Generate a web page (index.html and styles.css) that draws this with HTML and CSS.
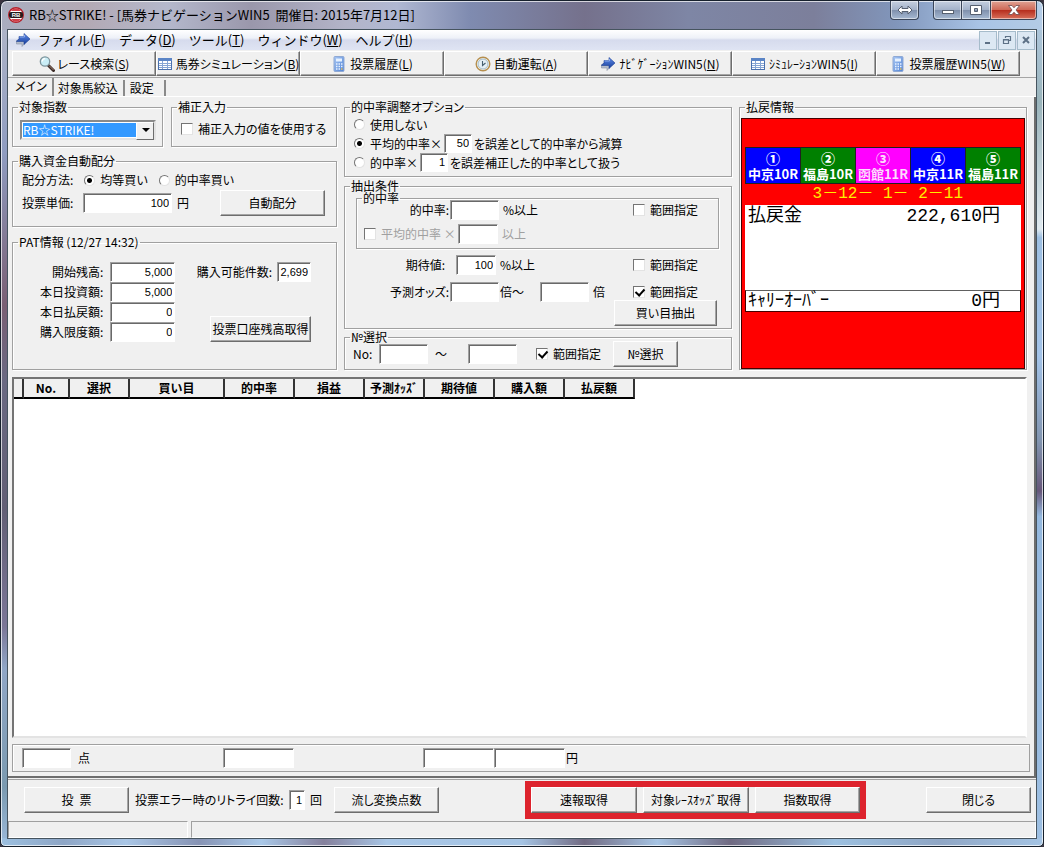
FILE: index.html
```html
<!DOCTYPE html>
<html lang="ja">
<head>
    <meta charset="utf-8">
    <title>RB☆STRIKE! - [馬券ナビゲーションWIN5]</title>
    <meta name="viewport" content="width=device-width, initial-scale=1">
    <link rel="stylesheet" href="styles.css">
</head>
<body>

<!-- アイコン定義 -->
<svg class="defs" width="0" height="0" aria-hidden="true">
    <defs>
        <linearGradient id="g-arrow" x1="0" y1="0" x2="0" y2="1">
            <stop offset="0" stop-color="#5f8be8"/><stop offset="1" stop-color="#173f9c"/>
        </linearGradient>
        <linearGradient id="g-calc" x1="0" y1="0" x2="1" y2="1">
            <stop offset="0" stop-color="#a9c8f5"/><stop offset="1" stop-color="#4f82d4"/>
        </linearGradient>
    </defs>
    <symbol id="i-arrow" viewBox="0 0 16 16">
        <path d="M1.500 8.500H7V6l4 4-4 4.500V12H1.500z" fill="#b4bccb" stroke="#8791a5" stroke-width=".6"/>
        <path d="M4 4.500h5V1.500l6 5.500L9 12.500V9.500H1.500L3 7.500h1z" fill="url(#g-arrow)" stroke="#1d3f93" stroke-width=".6"/>
        <path d="M4.500 5h5V3" fill="none" stroke="#9dbaf2" stroke-width=".8"/>
    </symbol>
    <symbol id="i-search" viewBox="0 0 16 16">
        <path d="M9.500 9.500l5 5" stroke="#3b2a26" stroke-width="3" stroke-linecap="round"/>
        <path d="M10 9.500l4.500 4.500" stroke="#a98775" stroke-width="1"/>
        <circle cx="6" cy="5.500" r="4.700" fill="#c9edf6" stroke="#7d949c" stroke-width="1.300"/>
        <path d="M3.200 5.500a3 3 0 0 1 3-2.800" fill="none" stroke="#fff" stroke-width="1.300"/>
    </symbol>
    <symbol id="i-table" viewBox="0 0 16 16">
        <rect x="1.500" y="2.500" width="13" height="11" fill="#fff" stroke="#4a70ad"/>
        <path d="M1 2h14v3H1z" fill="#5b85c6"/>
        <path d="M2 7.500h12M2 9.500h12M2 11.500h12M5.500 5v8M10.500 5v8" stroke="#86a5d4"/>
    </symbol>
    <symbol id="i-calc" viewBox="0 0 16 16">
        <rect x="3" y=".5" width="10" height="15" rx="1" fill="url(#g-calc)" stroke="#8fa9d4"/>
        <rect x="5" y="2.500" width="6" height="3" fill="#e6f1ff"/>
        <path d="M5 8h1.500M7.500 8H9M10 8h1.500M5 10.500h1.500M7.500 10.500H9M10 10.500h1.500M5 13h1.500M7.500 13H9" stroke="#e9f2ff" stroke-width="1.500"/>
        <path d="M10 13h1.500" stroke="#e7bd55" stroke-width="1.500"/>
    </symbol>
    <symbol id="i-clock" viewBox="0 0 16 16">
        <circle cx="8" cy="8" r="6.800" fill="#f5fafc" stroke="#b68f4e" stroke-width="1.400"/>
        <circle cx="8" cy="8" r="5" fill="#e4f0f6" stroke="#8fa9b8" stroke-width=".8"/>
        <path d="M7.500 5V9.500l3-2.500" fill="none" stroke="#46606f" stroke-width="1.100"/>
    </symbol>
</svg>

<div class="window">
    <header class="titlebar">
        <svg class="app-icon" viewBox="0 0 16 16" aria-hidden="true">
            <circle cx="8" cy="8" r="7.300" fill="#fff" stroke="#b3202a" stroke-width="1.400"/>
            <path d="M3 4a6 6 0 0 1 10 0zM3 12a6 6 0 0 0 10 0z" fill="#d0404a"/>
            <rect x="1" y="5" width="14" height="6" rx="2" fill="#251a1c"/>
            <text x="8" y="10.200" class="app-icon-text" text-anchor="middle">RB</text>
        </svg>
        <h1 class="title">RB☆STRIKE! - [馬券ナビゲーションWIN5&nbsp; 開催日: 2015年7月12日]</h1>
        <button class="cap cap-help" aria-label="切り替え">
            <svg width="16" height="10" viewBox="0 0 16 10"><path d="M1 5l4-4v2.500h6V1l4 4-4 4V6.500H5V9z" fill="#fff" stroke="#566070"/></svg>
        </button>
        <div class="cap-group">
            <button class="cap" aria-label="最小化">
                <svg width="12" height="10" viewBox="0 0 12 10"><rect x=".5" y="5.500" width="11" height="3" fill="#fff" stroke="#566070"/></svg>
            </button>
            <button class="cap" aria-label="最大化">
                <svg width="12" height="10" viewBox="0 0 12 10"><path d="M.5.5h11v9H.5zM4.500 3.500v3h3v-3z" fill="#fff" fill-rule="evenodd" stroke="#566070"/></svg>
            </button>
            <button class="cap cap-close" aria-label="ウィンドウを閉じる">
                <svg width="12" height="10" viewBox="0 0 12 10"><path d="M.5.500h3.500l2 2.300 2-2.300h3.500L8 5l3.500 4.500H8L6 7.200 4 9.500H.5L4 5z" fill="#fff" stroke="#6d4a4c" stroke-width=".8"/></svg>
            </button>
        </div>
    </header>

    <div class="client">
        <nav class="menubar">
            <svg class="icon" aria-hidden="true"><use href="#i-arrow"/></svg>
            <a href="#">ファイル(<u>F</u>)</a>
            <a href="#">データ(<u>D</u>)</a>
            <a href="#">ツール(<u>T</u>)</a>
            <a href="#">ウィンドウ(<u>W</u>)</a>
            <a href="#">ヘルプ(<u>H</u>)</a>
            <div class="mdi">
                <button aria-label="子ウィンドウを最小化"><svg width="10" height="10" viewBox="0 0 10 10"><path d="M2 8h5" stroke="#5d7186" stroke-width="2"/></svg></button>
                <button aria-label="子ウィンドウを元に戻す"><svg width="10" height="10" viewBox="0 0 10 10"><path d="M3.500 3V1.500h5v4H7M3 1.500h6M1.500 4.500h5v4h-5zM1 5h6" fill="none" stroke="#5d7186" stroke-width="1.200"/></svg></button>
                <button aria-label="子ウィンドウを閉じる"><svg width="10" height="10" viewBox="0 0 10 10"><path d="M2 2l6 6M8 2L2 8" stroke="#5d7186" stroke-width="2"/></svg></button>
            </div>
        </nav>

        <div class="toolbar">
            <button class="btn"><svg class="icon"><use href="#i-search"/></svg><span>レース検索(<u>S</u>)</span></button>
            <button class="btn"><svg class="icon"><use href="#i-table"/></svg><span>馬券シミュレーション(<u>B</u>)</span></button>
            <button class="btn"><svg class="icon"><use href="#i-calc"/></svg><span>投票履歴(<u>L</u>)</span></button>
            <button class="btn"><svg class="icon"><use href="#i-clock"/></svg><span>自動運転(<u>A</u>)</span></button>
            <button class="btn"><svg class="icon"><use href="#i-arrow"/></svg><span>ﾅﾋﾞｹﾞｰｼｮﾝWIN5(<u>N</u>)</span></button>
            <button class="btn"><svg class="icon"><use href="#i-table"/></svg><span>ｼﾐｭﾚｰｼｮﾝWIN5(<u>I</u>)</span></button>
            <button class="btn"><svg class="icon"><use href="#i-calc"/></svg><span>投票履歴WIN5(<u>W</u>)</span></button>
        </div>

        <div class="tabs" role="tablist">
            <button class="tab active" role="tab" aria-selected="true">メイン</button>
            <button class="tab" role="tab" aria-selected="false">対象馬絞込</button>
            <button class="tab" role="tab" aria-selected="false">設定</button>
        </div>

        <main class="page">
            <div class="panels">
                <div class="col">
                    <div class="pair">
                        <fieldset class="group">
                            <legend>対象指数</legend>
                            <div class="combo">
                                <select aria-label="対象指数">
                                    <option>RB☆STRIKE!</option>
                                </select>
                            </div>
                        </fieldset>
                        <fieldset class="group">
                            <legend>補正入力</legend>
                            <label class="check fix-check"><input type="checkbox">補正入力の値を使用する</label>
                        </fieldset>
                    </div>

                    <fieldset class="group alloc">
                        <legend>購入資金自動配分</legend>
                        <div class="alloc-body">
                            <div class="row alloc-method">
                                <span>配分方法:</span>
                                <label class="check"><input type="radio" name="alloc" checked>均等買い</label>
                                <label class="check"><input type="radio" name="alloc">的中率買い</label>
                            </div>
                            <div class="row alloc-price">
                                <label for="price">投票単価:</label>
                                <input class="num w-price" type="text" id="price" value="100">
                                <span>円</span>
                                <button class="btn btn-m">自動配分</button>
                            </div>
                        </div>
                    </fieldset>

                    <fieldset class="group pat">
                        <legend>PAT情報 (12/27 14:32)</legend>
                        <div class="pat-body">
                            <div class="pat-list">
                                <label for="p1">開始残高:</label><input class="num" type="text" id="p1" value="5,000">
                                <label for="p2">本日投資額:</label><input class="num" type="text" id="p2" value="5,000">
                                <label for="p3">本日払戻額:</label><input class="num" type="text" id="p3" value="0">
                                <label for="p4">購入限度額:</label><input class="num" type="text" id="p4" value="0">
                            </div>
                            <div class="pat-side">
                                <div class="row">
                                    <label for="p5">購入可能件数:</label>
                                    <input class="num w-count" type="text" id="p5" value="2,699">
                                </div>
                                <button class="btn">投票口座残高取得</button>
                            </div>
                        </div>
                    </fieldset>
                </div>

                <div class="col">
                    <fieldset class="group adjust">
                        <legend>的中率調整オプション</legend>
                        <div class="adjust-body">
                            <div class="row">
                                <label class="check"><input type="radio" name="adj">使用しない</label>
                            </div>
                            <div class="row">
                                <label class="check"><input type="radio" name="adj" checked>平均的中率×</label>
                                <input class="num w-rate" type="text" value="50" aria-label="平均的中率の係数">
                                <span>を誤差として的中率から減算</span>
                            </div>
                            <div class="row">
                                <label class="check"><input type="radio" name="adj">的中率×</label>
                                <input class="num w-rate" type="text" value="1" aria-label="的中率の係数">
                                <span>を誤差補正した的中率として扱う</span>
                            </div>
                        </div>
                    </fieldset>

                    <fieldset class="group extract">
                        <legend>抽出条件</legend>
                        <fieldset class="group hit">
                            <legend>的中率</legend>
                            <div class="hit-body">
                                <div class="row">
                                    <label class="lead" for="hit">的中率:</label>
                                    <input class="w-s" type="text" id="hit">
                                    <span class="unit">%以上</span>
                                    <label class="check range"><input type="checkbox">範囲指定</label>
                                </div>
                                <div class="row disabled">
                                    <label class="check lead-check"><input type="checkbox" disabled>平均的中率 ×</label>
                                    <input class="w-xs" type="text" disabled aria-label="平均的中率の倍率">
                                    <span class="unit">以上</span>
                                </div>
                            </div>
                        </fieldset>
                        <div class="row cond">
                            <label class="lead lead-expect" for="expect">期待値:</label>
                            <input class="num w-xs" type="text" id="expect" value="100">
                            <span class="unit">%以上</span>
                            <label class="check range"><input type="checkbox">範囲指定</label>
                        </div>
                        <div class="row cond">
                            <label class="lead" for="odds">予測オッズ:</label>
                            <input class="w-s" type="text" id="odds">
                            <span class="odds-from">倍〜</span>
                            <input class="w-s" type="text" aria-label="予測オッズ上限">
                            <span class="unit">倍</span>
                            <label class="check range"><input type="checkbox" checked>範囲指定</label>
                        </div>
                        <button class="btn btn-extract">買い目抽出</button>
                    </fieldset>

                    <fieldset class="group select-no">
                        <legend>№選択</legend>
                        <div class="row">
                            <label for="no1">No:</label>
                            <input class="w-s" type="text" id="no1">
                            <span class="tilde">〜</span>
                            <input class="w-s" type="text" aria-label="No上限">
                            <label class="check"><input type="checkbox" checked>範囲指定</label>
                            <button class="btn">№選択</button>
                        </div>
                    </fieldset>
                </div>

                <fieldset class="group payout">
                    <legend>払戻情報</legend>
                    <div class="board">
                        <div class="races">
                            <div class="race blue"><b>①</b>中京10R</div>
                            <div class="race green"><b>②</b>福島10R</div>
                            <div class="race pink"><b>③</b>函館11R</div>
                            <div class="race blue"><b>④</b>中京11R</div>
                            <div class="race green"><b>⑤</b>福島11R</div>
                        </div>
                        <div class="result"> 3－12－ 1－ 2－11</div>
                        <div class="money money-main"><span>払戻金</span><span>222,610円</span></div>
                        <div class="money"><span>ｷｬﾘｰｵｰﾊﾞｰ</span><span>0円</span></div>
                    </div>
                </fieldset>
            </div>

            <div class="grid-box">
                <table class="bets">
                    <thead>
                        <tr>
                            <th class="c-mark"></th>
                            <th class="c-no">No.</th>
                            <th class="c-60">選択</th>
                            <th class="c-95">買い目</th>
                            <th class="c-70">的中率</th>
                            <th class="c-70">損益</th>
                            <th class="c-60">予測ｵｯｽﾞ</th>
                            <th class="c-70">期待値</th>
                            <th class="c-70">購入額</th>
                            <th class="c-70">払戻額</th>
                        </tr>
                    </thead>
                </table>
            </div>

            <div class="totals">
                <input class="w-s" type="text" id="points" aria-label="点数">
                <label class="t-unit" for="points">点</label>
                <input class="w-t t-mid" type="text" aria-label="合計">
                <input class="w-t t-buy" type="text" aria-label="購入額合計">
                <input class="w-t" type="text" id="pay" aria-label="払戻額合計">
                <label for="pay">円</label>
            </div>
        </main>

        <div class="actions">
            <button class="btn btn-m">投&ensp;票</button>
            <label class="retry" for="retry">投票エラー時のリトライ回数:</label>
            <input class="w-retry num" type="text" id="retry" value="1">
            <span class="times">回</span>
            <button class="btn btn-m">流し変換点数</button>
            <div class="highlight">
                <button class="btn">速報取得</button>
                <button class="btn">対象ﾚｰｽｵｯｽﾞ取得</button>
                <button class="btn">指数取得</button>
            </div>
            <button class="btn btn-m btn-close">閉じる</button>
        </div>

        <footer class="status">
            <div class="status-cell"></div>
            <div class="status-cell"></div>
        </footer>
    </div>
</div>

</body>
</html>
```
FILE: styles.css
```css
* {
    box-sizing: border-box;
}
body {
    margin: 0;
    background: #3a3440;
    color: #000;
    font-family: "Noto Sans CJK JP", sans-serif;
    font-size: 12px;
    line-height: 12px;
    font-feature-settings: "palt";
}
button, input, select {
    font: inherit;
    font-feature-settings: inherit;
    color: inherit;
    margin: 0;
}
.defs {
    position: absolute;
}
.icon {
    width: 16px;
    height: 16px;
    flex: none;
}

/* ウィンドウ枠 */
.window {
    display: flex;
    flex-direction: column;
    min-height: 100vh;
    padding: 0 6px 7px;
    border: 1px solid #16202c;
    border-radius: 7px 7px 5px 5px;
    box-shadow: inset 0 0 0 1px rgba(255, 255, 255, 0.7);
    background:
        linear-gradient(90deg, #a9aec0 0, #b3a9b4 8%, #b4b8cc 16%, #9a97ab 24%, #b3b4c8 33%, #b0b8d2 38%, #7f8bb0 45%, #75718c 56%, #7e86a5 66%, #7c7f9b 78%, #8196bb 86%, #a9c4e6 94%, #b4cce6 100%) top / 100% 29px no-repeat,
        linear-gradient(90deg, #9cc0e0 0, #8ea6c6 6%, #a9c6e6 12%, #8693b4 19%, #a9c8e8 25%, #85819d 31%, #a8c6e6 37%, #a5c4e4 50%, #716b83 56%, #a6c4e4 63%, #6f6a82 70%, #9cc0e0 80%, #8fa6c5 90%, #a4c4e4 100%) bottom / 100% 8px no-repeat,
        linear-gradient(180deg, #b4b9c9 0, #8f9cc0 18%, #7a5f74 36%, #6a6982 45%, #625f75 60%, #7b7697 74%, #90a6c6 79%, #7b9ab0 93%, #9cbadb 100%) left / 50% 100% no-repeat,
        linear-gradient(180deg, #b4cce6 0, #9ab4bb 12%, #dfe9ef 27%, #9dbfe2 28%, #a3c3e8 42%, #8295b0 52%, #66577a 58%, #94b8de 61%, #9dbfe2 100%) right / 50% 100% no-repeat;
}
.titlebar {
    display: flex;
    align-items: flex-start;
    height: 28px;
    padding-left: 1px;
}
.app-icon {
    width: 16px;
    height: 16px;
    margin-top: 6px;
}
.app-icon-text {
    font: bold 6px "Liberation Sans", sans-serif;
    fill: #fff;
}
.title {
    flex: 1;
    margin: 0 0 0 5px;
    font-size: 13px;
    font-weight: normal;
    font-feature-settings: normal;
    line-height: 27px;
    white-space: nowrap;
}
.cap-group {
    display: flex;
    margin-left: 14px;
}
.cap {
    display: flex;
    align-items: center;
    justify-content: center;
    width: 29px;
    height: 19px;
    padding: 0;
    border: 1px solid #3b4659;
    border-top: 0;
    background: linear-gradient(#c5d0e0, #a3b2c9 48%, #7e8fab 50%, #a7bad3);
    box-shadow: inset 0 0 0 1px rgba(255, 255, 255, 0.5);
}
.cap + .cap {
    border-left: 0;
}
.cap-help {
    border-radius: 0 0 4px 4px;
}
.cap-group .cap:first-child {
    border-bottom-left-radius: 4px;
}
.cap-group .cap-close {
    width: 46px;
    border-bottom-right-radius: 4px;
    background: linear-gradient(#e0a394, #cf6a58 48%, #b52c1c 50%, #d8705c);
}
.client {
    flex: 1;
    display: flex;
    flex-direction: column;
    border: 1px solid #46545f;
    background: #f0f0f0;
}

/* メニュー */
.menubar {
    display: flex;
    align-items: center;
    height: 20px;
    padding: 0 1px 0 7px;
    background: linear-gradient(#fff, #eef1f8 40%, #d6dbed 50%, #dfe4f3);
    font-size: 13px;
    font-feature-settings: normal;
}
.menubar a {
    color: #000;
    text-decoration: none;
    margin-left: 13px;
}
.menubar .icon + a {
    margin-left: 7px;
}
.mdi {
    display: flex;
    gap: 1px;
    margin-left: auto;
}
.mdi button {
    display: flex;
    align-items: center;
    justify-content: center;
    width: 18px;
    height: 19px;
    padding: 0;
    border: 1px solid #a6bccb;
    background: #dce8f3;
}

/* ボタン */
.btn {
    display: flex;
    align-items: center;
    justify-content: center;
    height: 26px;
    padding: 0;
    border: 1px solid;
    border-color: #fff #6d6d6d #6d6d6d #fff;
    box-shadow: inset -1px -1px 0 #a5a5a5;
    background: #f0f0f0;
    white-space: nowrap;
}
.btn-m {
    width: 105px;
}
.toolbar {
    display: flex;
    padding: 1px 16px 1px 4px;
    border-bottom: 1px solid #a5a5a5;
}
.toolbar .btn {
    flex: 1 1 0;
    min-width: 0;
    gap: 3px;
    height: 25px;
}

/* タブ */
.tabs {
    display: flex;
    align-items: flex-end;
    height: 19px;
    border-bottom: 1px solid #fff;
}
.tab {
    height: 16px;
    padding: 0 5px 0 4px;
    border: 0;
    border-right: 2px solid #8a8a8a;
    background: none;
}
.tab:last-child {
    padding: 0 10px 0 5px;
}
.tab.active {
    height: 18px;
    padding: 0 5px 2px 7px;
}
.page {
    flex: 1;
    display: flex;
    flex-direction: column;
    padding: 4px;
    border-right: 2px solid #6d6d6d;
    border-bottom: 2px solid #6d6d6d;
}

/* グループ枠 */
.group {
    min-width: 0;
    margin: 0;
    padding: 0;
    border: 1px solid #a0a0a0;
    box-shadow: 1px 1px 0 #fff, inset 1px 1px 0 #fff;
}
.group legend {
    margin-left: 5px;
    padding: 0 1px;
    height: 12px;
}
.panels {
    display: grid;
    grid-template-columns: 325fr 388fr 288fr;
    gap: 7px;
    margin-right: 3px;
}
.col {
    display: flex;
    flex-direction: column;
    min-width: 0;
}
.row {
    display: flex;
    align-items: center;
    white-space: nowrap;
}
input[type=text] {
    width: 49px;
    height: 20px;
    padding: 0 0 0 1px;
    border: 1px solid;
    border-color: #a0a0a0 #fff #fff #a0a0a0;
    border-radius: 0;
    box-shadow: inset 1px 1px 0 #696969;
    background: #fff;
    min-width: 0;
}
input.num {
    padding: 0 2px 1px 1px;
    font-family: "Liberation Sans", sans-serif;
    font-size: 11px;
    text-align: right;
}
.check {
    display: flex;
    align-items: center;
    gap: 5px;
    white-space: nowrap;
}
.check input {
    appearance: none;
    flex: none;
    width: 12px;
    height: 12px;
    border: 1px solid;
    border-color: #747474 #e3e3e3 #e3e3e3 #747474;
    background: #fff;
    position: relative;
}
.check input[type=radio] {
    width: 11px;
    height: 11px;
    border-radius: 50%;
}
.check input[type=radio]:checked {
    background: radial-gradient(circle, #000 2px, #fff 3px);
}
.check input[type=checkbox]:checked::after {
    content: "";
    position: absolute;
    left: 3px;
    top: 0;
    width: 4px;
    height: 7px;
    border: solid #000;
    border-width: 0 2px 2px 0;
    transform: rotate(42deg);
}

/* 左列 */
.pair {
    display: grid;
    grid-template-columns: 151fr 166fr;
    gap: 8px;
    height: 46px;
}
.combo {
    position: relative;
    margin: 7px 6px 0 7px;
    height: 20px;
}
.combo select {
    appearance: none;
    width: 100%;
    height: 20px;
    padding: 0 20px 0 1px;
    border: 2px solid;
    border-color: #8a8a8a #e3e3e3 #e3e3e3 #8a8a8a;
    border-radius: 0;
    background: #fff linear-gradient(#39f, #39f) 1px 1px / calc(100% - 19px) calc(100% - 2px) no-repeat;
    color: #fff;
}
.combo::before {
    content: "";
    position: absolute;
    right: 2px;
    top: 2px;
    width: 16px;
    height: 16px;
    border: 1px solid;
    border-color: #fff #6d6d6d #6d6d6d #fff;
    background: #f0f0f0;
    pointer-events: none;
}
.combo::after {
    content: "";
    position: absolute;
    right: 6px;
    top: 8px;
    border: 4px solid transparent;
    border-top-color: #000;
    border-bottom: 0;
    pointer-events: none;
}
.fix-check {
    margin: 10px 0 0 9px;
}
.alloc {
    margin-top: 8px;
    height: 72px;
}
.alloc-body {
    padding: 5px 11px 0 9px;
}
.alloc-method {
    gap: 11px;
    height: 16px;
}
.alloc-price {
    margin-top: 2px;
}
.alloc-price label {
    width: 61px;
}
input.w-price {
    width: 89px;
    margin-right: 5px;
}
.alloc-price .btn {
    margin-left: auto;
}
.pat {
    flex: 1;
    margin-top: 9px;
}
.pat-body {
    display: flex;
    justify-content: space-between;
    padding: 14px 25px 0 27px;
}
.pat-list {
    display: grid;
    grid-template-columns: auto 65px;
    column-gap: 7px;
    align-items: center;
}
.pat-list label {
    text-align: right;
}
.pat-list input.num {
    width: 65px;
}
.pat-side {
    display: flex;
    flex-direction: column;
    align-items: flex-end;
    gap: 34px;
}
.pat-side .row {
    gap: 5px;
}
.pat-side .btn {
    width: 101px;
}
input.w-count {
    width: 34px;
}

/* 中央列 */
.adjust {
    height: 76px;
}
.adjust-body {
    padding: 2px 9px 0;
}
.adjust .row {
    height: 19px;
    gap: 2px;
}
input.w-rate {
    width: 28px;
    height: 19px;
}
.extract {
    margin-top: 3px;
    height: 149px;
    padding: 0 12px 0 11px;
}
.extract > legend {
    margin-left: -6px;
}
.hit {
    height: 57px;
}
.hit-body {
    display: grid;
    gap: 4px;
    margin-top: -4px;
}
input.w-s {
    width: 49px;
}
input.w-xs {
    width: 40px;
}
.lead {
    width: 92px;
    text-align: right;
    margin-right: 1px;
}
.lead-expect {
    margin-right: 7px;
    padding-right: 4px;
}
.lead-check {
    width: 94px;
    margin-left: 7px;
}
.disabled {
    color: #a0a0a0;
}
.unit {
    margin-left: 4px;
}
.range {
    margin-left: auto;
    margin-right: 20px;
}
.cond {
    margin-top: 6px;
    padding: 0 1px;
}
.cond + .cond {
    margin-top: 7px;
}
.odds-from {
    width: 40px;
    margin-left: 1px;
}
.btn-extract {
    width: 103px;
    margin: -2px 2px 0 auto;
}
.select-no {
    flex: 1;
    margin-top: 2px;
}
.select-no .row {
    margin-top: -2px;
    padding-left: 8px;
}
.select-no label[for=no1] {
    width: 26px;
}
.tilde {
    width: 40px;
    padding-left: 7px;
}
.select-no .check {
    margin-left: 19px;
}
.select-no .btn {
    width: 65px;
    margin-left: 12px;
}

/* 払戻情報 */
.payout {
    height: 269px;
}
.board {
    height: 251px;
    margin: 5px 1px 0;
    padding: 28px 3px 0;
    border: 1px solid #400;
    background: #f00;
}
.races {
    display: grid;
    grid-template-columns: repeat(5, 1fr);
    gap: 1px;
    padding: 1px;
    background: #202020;
}
.race {
    height: 35px;
    padding-top: 3px;
    color: #fff;
    font-size: 13px;
    font-weight: bold;
    line-height: 15px;
    text-align: center;
    white-space: nowrap;
}
.race b {
    display: block;
    font-size: 14px;
}
.blue {
    background: #00f;
}
.green {
    background: #008000;
}
.pink {
    background: #f0f;
    color: #fcdcfc;
}
.result,
.money {
    font-family: "Liberation Mono", "Noto Sans CJK JP", monospace;
    font-feature-settings: normal;
}
.result {
    height: 21px;
    color: #fe0;
    font-size: 16px;
    line-height: 21px;
    text-align: center;
    white-space: pre;
}
.money {
    display: flex;
    justify-content: space-between;
    height: 22px;
    padding: 0 20px 0 2px;
    border: 1px solid #400;
    border-top-color: #606060;
    background: #fff;
    font-size: 18px;
    line-height: 20px;
}
.money-main {
    height: 85px;
    border: 0;
    padding: 1px 21px 0 3px;
}

/* 一覧 */
.grid-box {
    flex: 1;
    margin: 7px 3px 0 0;
    border: 2px solid;
    border-color: #747474 #fff #e3e3e3 #747474;
    background: #fff;
}
.bets {
    border-collapse: separate;
    border-spacing: 0;
    table-layout: fixed;
    width: 621px;
}
.bets th {
    height: 20px;
    padding: 0;
    border-right: 2px solid #333;
    border-bottom: 2px solid #000;
    background: #f0f0f0;
    overflow: hidden;
    white-space: nowrap;
}
.c-mark { width: 10px; }
.c-no { width: 46px; }
.c-60 { width: 60px; }
.c-70 { width: 70px; }
.c-95 { width: 95px; }
.totals {
    display: flex;
    align-items: center;
    height: 28px;
    margin-top: 6px;
    padding: 0 9px;
    border: 1px solid #a0a0a0;
    box-shadow: inset 1px 1px 0 #fff;
}
.t-unit {
    margin-left: 7px;
}
input.w-t {
    width: 71px;
}
.t-mid {
    margin-left: 133px;
}
.t-buy {
    margin-left: 129px;
}
.totals label[for=pay] {
    margin-left: 1px;
}

/* 下部ボタン */
.actions {
    display: flex;
    align-items: center;
    margin-top: 1px;
    padding: 1px 5px 2px 16px;
    border-top: 1px solid #a0a0a0;
    white-space: nowrap;
}
.retry {
    width: 148px;
    margin: 0 6px;
}
input.w-retry {
    width: 16px;
}
.times {
    margin: 0 12px 0 5px;
}
.highlight {
    display: flex;
    gap: 6px;
    margin-left: 86px;
    border: 6px solid #dd232d;
    background: #f0f0f0;
}
.highlight .btn {
    width: 106px;
}
.highlight .btn:last-child {
    width: 105px;
}
.btn-close {
    margin-left: auto;
}
.status {
    display: flex;
    gap: 3px;
    height: 17px;
}
.status-cell {
    flex: 1;
    border: 1px solid;
    border-color: #a0a0a0 #fff #fff #a0a0a0;
}
.status-cell:first-child {
    flex: none;
    width: 180px;
}
```
